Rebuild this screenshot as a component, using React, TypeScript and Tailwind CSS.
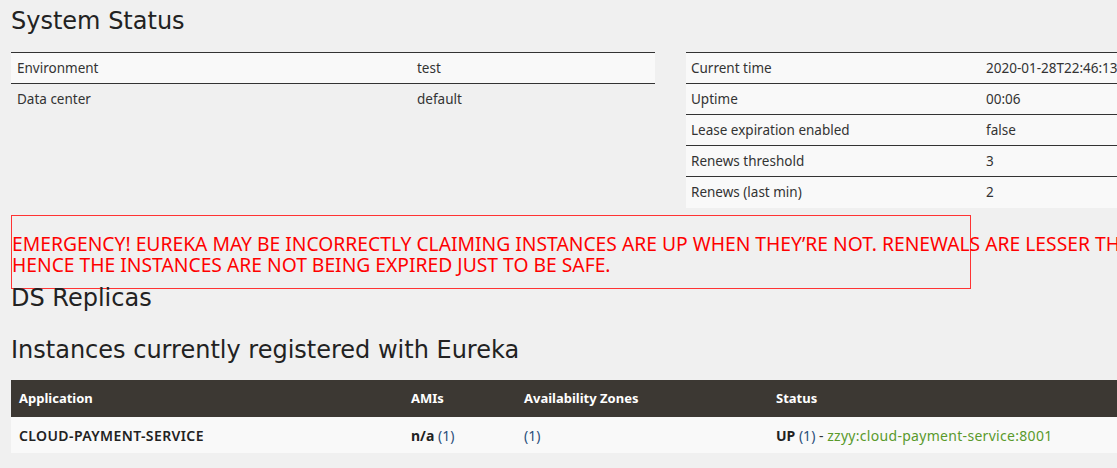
import React from "react";

const leftRows = [
  ["Environment", "test"],
  ["Data center", "default"],
];
const rightRows = [
  ["Current time", "2020-01-28T22:46:13 +0800"],
  ["Uptime", "00:06"],
  ["Lease expiration enabled", "false"],
  ["Renews threshold", "3"],
  ["Renews (last min)", "2"],
];

export default function App() {
  return (
    <div className="w-[1117px] h-[468px] overflow-hidden bg-[#f0f0f0] text-[#333] [font-family:'Noto_Sans','Open_Sans',sans-serif]">
      <div className="w-[1340px] pl-[11px]">
        <h2 className="pt-[5px] text-[24px] leading-[32px] font-medium text-[#222] [font-family:'DejaVu_Sans',sans-serif]">
          System Status
        </h2>
        <div className="mt-[15px] flex gap-[31px] items-start">
          <div className="w-[644px] border-t border-[#333]">
            {leftRows.map(([k, v], i) => (
              <div
                key={k}
                className={`flex items-center text-[13.5px] ${i === 0 ? "bg-[#f9f9f9] border-b border-[#333] h-[31px]" : "h-[30px]"}`}
              >
                <div className="w-[400px] pl-[6px]">{k}</div>
                <div className="pl-[6px]">{v}</div>
              </div>
            ))}
          </div>
          <div className="w-[644px] border-t border-[#333] bg-[#f9f9f9]">
            {rightRows.map(([k, v], i) => (
              <div
                key={k}
                className={`flex items-center text-[13.5px] h-[31px] ${i < rightRows.length - 1 ? "border-b border-[#333]" : ""}`}
              >
                <div className="w-[294px] pl-[5px]">{k}</div>
                <div className="pl-[6px] whitespace-nowrap">{v}</div>
              </div>
            ))}
          </div>
        </div>
        <div className="mt-[7px] w-[960px] h-[74px] border border-[#ff3333] pt-[17px]">
          <div className="whitespace-nowrap text-[19.3px] leading-[21px] text-[#ff0000] [font-family:'Noto_Sans',sans-serif]">
            <div>
              EMERGENCY! EUREKA MAY BE INCORRECTLY CLAIMING INSTANCES ARE UP WHEN THEY’RE NOT. RENEWALS ARE LESSER THAN THRESHOLD AND
            </div>
            <div>HENCE THE INSTANCES ARE NOT BEING EXPIRED JUST TO BE SAFE.</div>
          </div>
        </div>
        <h3 className="-mt-[7px] text-[24px] leading-[32px] font-medium text-[#222] [font-family:'DejaVu_Sans',sans-serif]">
          DS Replicas
        </h3>
        <h2 className="mt-[20px] text-[24px] leading-[32px] font-medium text-[#222] [font-family:'DejaVu_Sans',sans-serif]">
          Instances currently registered with Eureka
        </h2>
        <div className="mt-[14px] w-[1320px]">
          <div className="flex h-[37px] items-center bg-[#3c3833] text-white text-[13px] font-bold">
            <div className="w-[392px] pl-[8px]">Application</div>
            <div className="w-[113px] pl-[8px]">AMIs</div>
            <div className="w-[252px] pl-[8px]">Availability Zones</div>
            <div className="pl-[8px]">Status</div>
          </div>
          <div className="flex h-[36px] items-center bg-[#f9f9f9] text-[14px]">
            <div className="w-[392px] pl-[8px] font-semibold tracking-[0.4px] text-[#222]">CLOUD-PAYMENT-SERVICE</div>
            <div className="w-[113px] pl-[8px]">
              <b className="text-[#222]">n/a</b> <span className="text-[#2a4f7a]">(1)</span>
            </div>
            <div className="w-[252px] pl-[8px]">
              <span className="text-[#2a4f7a]">(1)</span>
            </div>
            <div className="pl-[8px] whitespace-nowrap">
              <b className="text-[#222]">UP</b> <span className="text-[#2a4f7a]">(1)</span> -{" "}
              <span className="text-[#5a9a2c] tracking-[0.3px]">zzyy:cloud-payment-service:8001</span>
            </div>
          </div>
        </div>
      </div>
    </div>
  );
}
